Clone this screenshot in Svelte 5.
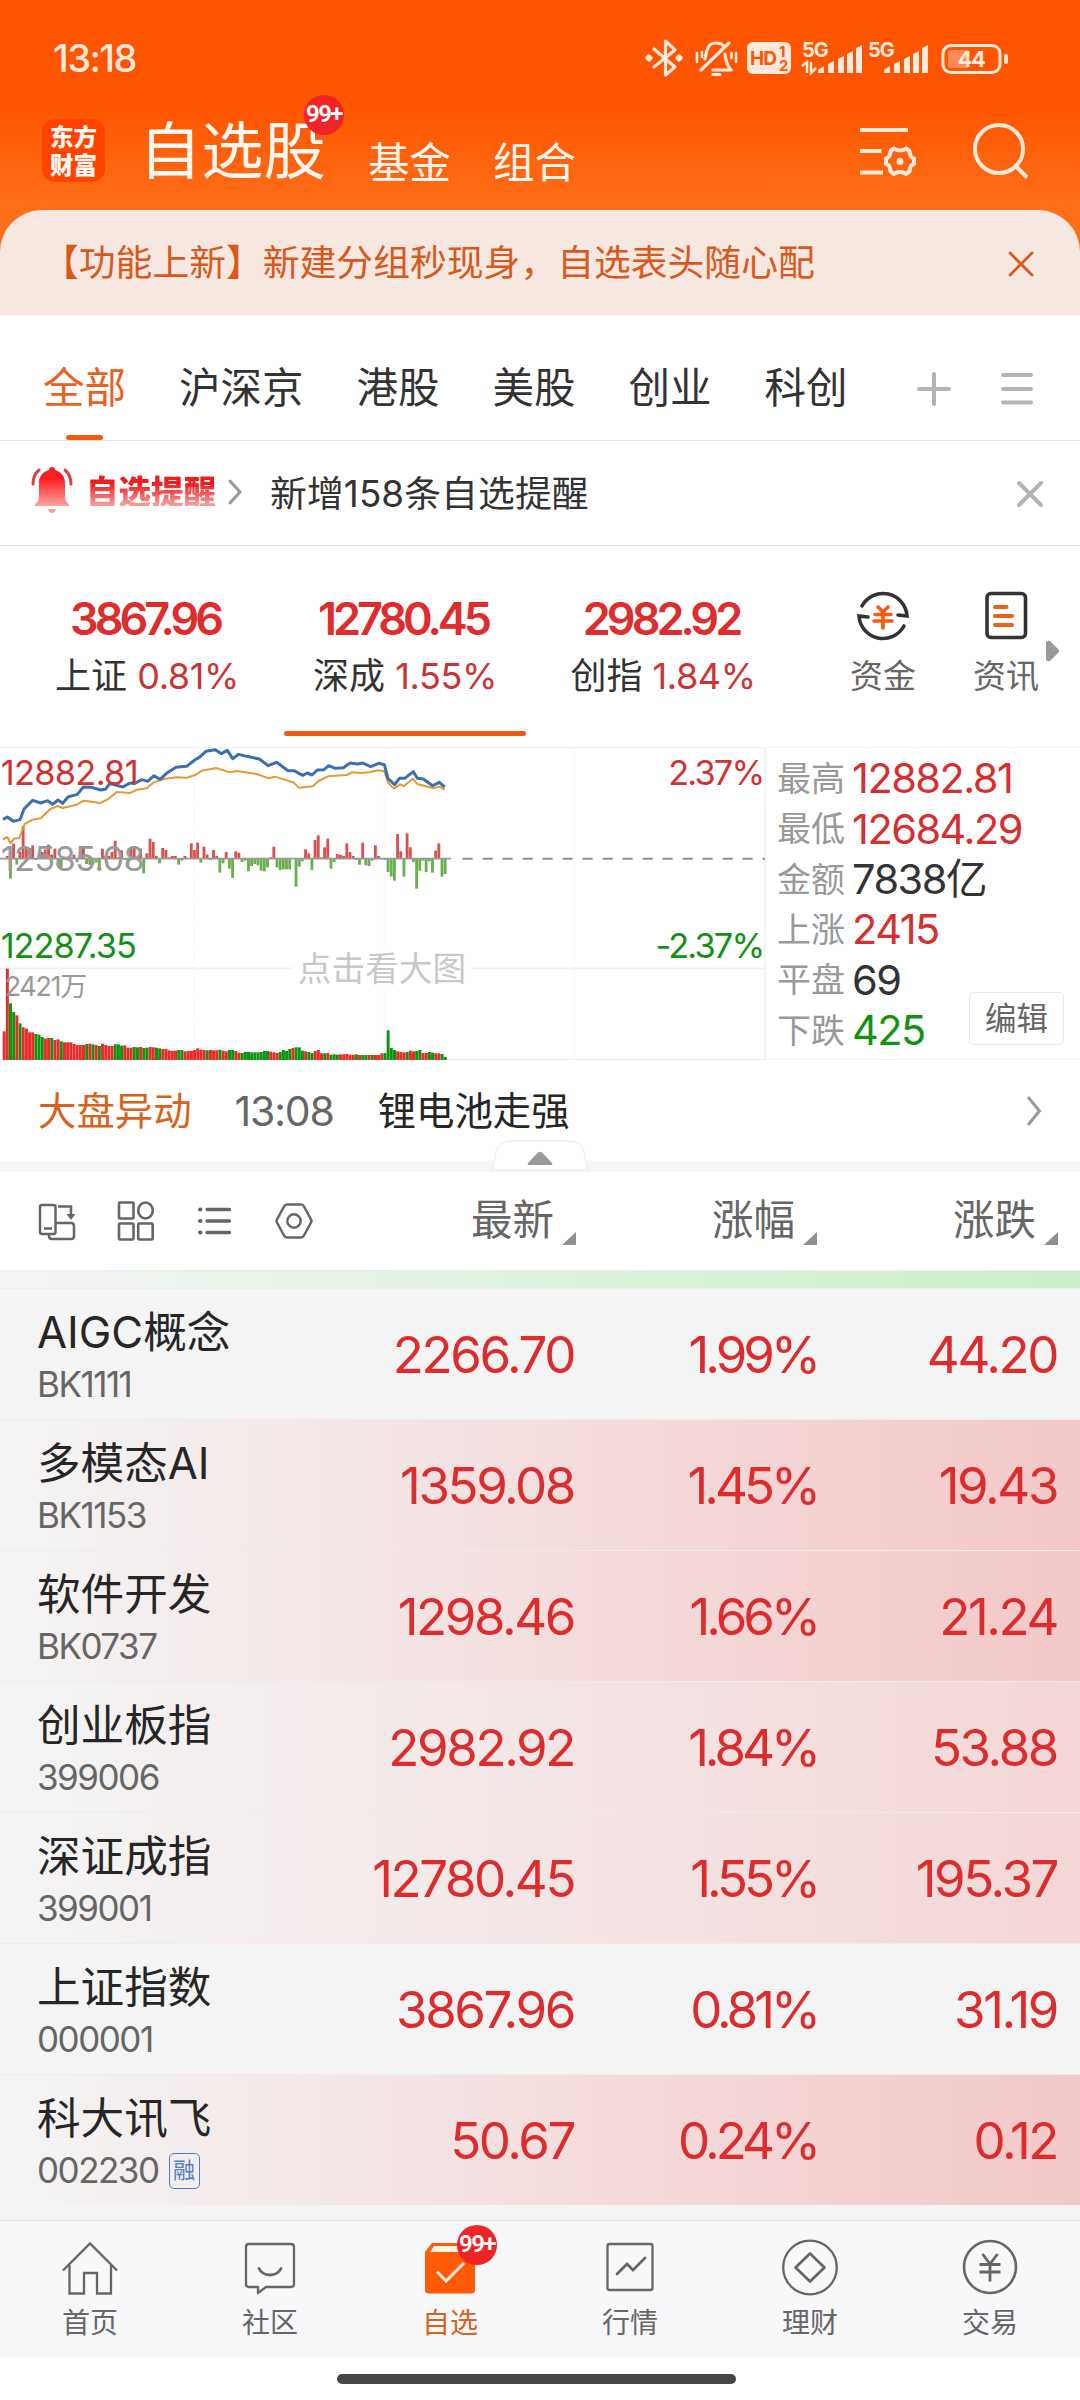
<script lang="ts">
	type Tint = 'flat' | 'light' | 'strong';
	type Quote = {
		name: string;
		code: string;
		price: string;
		percent: string;
		change: string;
		tint: Tint;
		margin?: boolean;
	};

	const groups = ['全部', '沪深京', '港股', '美股', '创业', '科创'];

	const indices = [
		{ name: '上证', value: '3867.96', percent: '0.81%' },
		{ name: '深成', value: '12780.45', percent: '1.55%' },
		{ name: '创指', value: '2982.92', percent: '1.84%' },
	];

	const stats = [
		{ label: '最高', value: '12882.81', tone: 'up' },
		{ label: '最低', value: '12684.29', tone: 'up' },
		{ label: '金额', value: '7838亿', tone: '' },
		{ label: '上涨', value: '2415', tone: 'up' },
		{ label: '平盘', value: '69', tone: '' },
		{ label: '下跌', value: '425', tone: 'down' },
	];

	const columns = ['最新', '涨幅', '涨跌'];

	const quotes: Quote[] = [
		{ name: 'AIGC概念', code: 'BK1111', price: '2266.70', percent: '1.99%', change: '44.20', tint: 'flat' },
		{ name: '多模态AI', code: 'BK1153', price: '1359.08', percent: '1.45%', change: '19.43', tint: 'strong' },
		{ name: '软件开发', code: 'BK0737', price: '1298.46', percent: '1.66%', change: '21.24', tint: 'strong' },
		{ name: '创业板指', code: '399006', price: '2982.92', percent: '1.84%', change: '53.88', tint: 'light' },
		{ name: '深证成指', code: '399001', price: '12780.45', percent: '1.55%', change: '195.37', tint: 'light' },
		{ name: '上证指数', code: '000001', price: '3867.96', percent: '0.81%', change: '31.19', tint: 'flat' },
		{ name: '科大讯飞', code: '002230', price: '50.67', percent: '0.24%', change: '0.12', tint: 'strong', margin: true },
	];

	const tabs = [
		{ id: 'home', label: '首页' },
		{ id: 'community', label: '社区' },
		{ id: 'watch', label: '自选' },
		{ id: 'market', label: '行情' },
		{ id: 'wealth', label: '理财' },
		{ id: 'trade', label: '交易' },
	];

	let activeGroup = $state(0);
	let activeIndex = $state(1);
	let activeTab = $state('watch');

	// one bar per time slot, positive is buying and negative is selling
	const STEP = 9.52;
	const flow = [
		0, 8, -60, 45, -18, 20, 98, 30, 32, 40, -4, 12, 20, 28, 42, 12, 30, -20, -28, 6,
		-5, 4, 12, -10, 38, 32, -16, -18, -16, -12, -30, 30, 8, 8, 20, 54, 4, 25, -4, -20,
		30, 34, 4, 30, -44, 16, 60, 50, 8, -14, 32, 26, 4, 8, 8, -18, -6, 8, 0, 46,
		26, 48, -12, 36, 12, -4, 26, 8, -42, -14, 20, -30, -58, 22, 18, -10, -6, -38, -22, -16,
		-20, -36, -38, -26, 4, 36, -26, -34, -32, -32, -32, 0, -84, -24, -8, 28, 16, -34, 56, 70,
		4, 34, 60, -30, -10, 14, 12, 8, 46, 20, 8, -4, -18, 48, -20, -22, -6, 40, 8, 0,
		-4, -40, -54, -66, 74, 22, -54, 76, 34, -10, -90, -36, -6, -40, -8, -42, 24, 46, -54, -46,
	];

	const volume = [
		86, 274, 170, 144, 134, 110, 98, 94, 83, 83, 78, 76, 69, 64, 66, 66, 60, 62, 56, 53,
		53, 53, 48, 45, 45, 45, 48, 49, 47, 45, 42, 49, 45, 42, 42, 47, 47, 43, 44, 37,
		37, 39, 38, 39, 36, 37, 39, 38, 37, 35, 33, 33, 29, 27, 28, 30, 30, 26, 27, 27,
		30, 35, 31, 30, 29, 30, 29, 29, 31, 28, 26, 30, 30, 27, 22, 21, 24, 24, 23, 23,
		23, 24, 27, 27, 25, 23, 21, 24, 30, 27, 33, 36, 38, 38, 28, 26, 24, 21, 27, 30,
		20, 20, 21, 16, 17, 16, 17, 17, 18, 16, 16, 17, 15, 15, 15, 15, 15, 15, 15, 20,
		21, 89, 36, 30, 26, 24, 23, 24, 28, 26, 27, 30, 21, 21, 24, 22, 20, 20, 18, 9,
	];
	const volumeDown = new Set([
		2, 3, 5, 10, 11, 12, 15, 18, 26, 28, 30, 35, 36, 37, 41, 42, 44, 45, 48, 49,
		55, 56, 64, 68, 71, 72, 75, 76, 77, 78, 79, 80, 81, 82, 83, 87, 88, 89, 90, 92,
		93, 94, 96, 97, 101, 103, 104, 105, 111, 113, 114, 116, 120, 121, 122, 123, 127, 130, 131, 134,
		135, 138, 139,
	]);

	const priceLine =
		'9,253 22,246 40,259 60,254 72,222 98,196 122,204 143,197 158,208 174,195 188,205 204,186 232,178 250,156 275,157 302,165 316,163 330,145 368,156 388,145 408,143 426,134 443,139 462,122 480,133 502,113 528,97 560,94 584,75 598,67 618,49 646,44 664,56 682,46 698,71 716,58 740,64 778,72 804,92 830,82 864,107 882,107 908,121 922,114 936,120 952,105 972,104 986,92 1006,100 1030,98 1050,84 1072,87 1088,84 1112,95 1136,85 1153,89 1164,131 1184,149 1198,130 1214,130 1240,110 1252,130 1270,132 1298,152 1318,142 1334,156';
	const averageLine =
		'9,313 22,306 32,325 42,311 58,309 74,267 98,254 122,250 150,223 172,213 188,219 230,209 252,197 300,204 322,194 350,171 390,174 412,164 440,160 460,143 492,132 530,127 560,128 584,121 606,107 648,99 690,112 712,108 770,117 806,130 824,125 880,142 896,158 938,154 956,138 984,124 1040,120 1056,112 1082,114 1108,112 1134,106 1153,109 1164,143 1182,161 1200,148 1212,153 1238,131 1252,147 1300,160 1318,155 1334,164';
</script>

<div class="screen">
	<header class="top">
		<div class="status">
			<span class="clock">13:18</span>
			<svg class="status-icons" width="376" height="44" viewBox="0 0 376 44" fill="none">
				<g stroke="#ffe9dc" stroke-width="3.200" stroke-linejoin="round" stroke-linecap="round">
					<path d="M9 13 30 31 20.500 39V5L30 14 9 31" />
					<path d="M4 20 6 22 4 24 2 22ZM34 20 36 22 34 24 32 22Z" />
				</g>
				<g stroke="#ffe9dc" stroke-width="3.200" stroke-linejoin="round" stroke-linecap="round">
					<path d="M60 23C62 13 63 7 71 7c4 0 7 1.500 8.500 4M68 34h18c-5-5-5-10-6-16M84 7 56 34M68 38.500h7" />
					<path d="M52 17v9M57 16v5M91 17v9M86.500 17v5" stroke-width="2.600" />
				</g>
				<rect x="102" y="6" width="44" height="32" rx="6" fill="#ffe9dc" />
				<text class="hd" x="105" y="29">HD</text>
				<text class="hd-num" x="134" y="21">1</text>
				<text class="hd-num" x="134" y="35">2</text>
				{#each [0, 66] as dx}
					<g fill="#ffe9dc" transform="translate({dx} 0)">
						<text class="gen" x="157" y="21">5G</text>
						<path d="M173 34l6-4v7h-6zM183 28l6-3v12h-6zM193 23l6-3v17h-6zM202 18l6-3v22h-6zM211 12l6-3v28h-6z" />
					</g>
				{/each}
				<path d="M157 30 162 26V37M166 26V37L171 32" stroke="#ffe9dc" stroke-width="2.500" />
				<rect x="298" y="9.500" width="57" height="27" rx="8" stroke="#ffe9dc" stroke-width="3" />
				<rect x="303" y="14" width="21" height="18" rx="3" fill="#ff8a55" />
				<path d="M361 20v6" stroke="#ffe9dc" stroke-width="4" stroke-linecap="round" />
				<text class="battery" x="326" y="31">44</text>
			</svg>
		</div>

		<div class="titlebar">
			<div class="logo"><span>东方</span><span>财富</span></div>
			<div class="title">自选股<span class="badge title-badge">99+</span></div>
			<span class="subtitle">基金</span>
			<span class="subtitle">组合</span>
			<svg class="list-gear" width="60" height="54" viewBox="0 0 60 54" fill="none" stroke="#ffe9dc" stroke-width="4">
				<path d="M2 7h48M2 28h21.500M2 49.500h23" />
				<path
					stroke-linejoin="round"
					d="M36 25.500q2.500 2 6 2 3.500 0 6-2l3.500 2.500q0 3.500 1.500 5.500 1 1.500 3 2v5.500q-2 .500-3 2-1.500 2-1.500 5.500l-3.500 2.500q-2.500-2-6-2-3.500 0-6 2l-3.500-2.500q0-3.500-1.500-5.500-1-1.500-3-2v-5.500q2-.500 3-2 1.500-2 1.500-5.500Z"
				/>
				<circle cx="42" cy="38.500" r="3.500" fill="#ffe9dc" stroke="none" />
			</svg>
			<svg width="58" height="58" viewBox="0 0 58 58" fill="none" stroke="#ffe9dc" stroke-width="4">
				<circle cx="27" cy="27" r="24" />
				<path d="M43.500 44 55 55.500" />
			</svg>
		</div>

		<div class="notice">
			<span>【功能上新】新建分组秒现身，自选表头随心配</span>
			<svg width="26" height="26" viewBox="0 0 26 26" stroke="#d8591b" stroke-width="2.800" stroke-linecap="round">
				<path d="M2 2 24 24M24 2 2 24" />
			</svg>
		</div>
	</header>

	<nav class="groups">
		{#each groups as group, i}
			<button class="group" class:active={i === activeGroup} onclick={() => (activeGroup = i)}>{group}</button>
		{/each}
		<svg class="add" width="36" height="36" viewBox="0 0 36 36" stroke="#b3b3b3" stroke-width="4" stroke-linecap="round">
			<path d="M18 3v30M3 18h30" />
		</svg>
		<svg width="34" height="34" viewBox="0 0 34 34" stroke="#b3b3b3" stroke-width="4" stroke-linecap="round">
			<path d="M3 3h28M3 17h28M3 30.500h28" />
		</svg>
	</nav>

	<section class="alert">
		<svg width="42" height="46" viewBox="0 0 42 46" fill="none">
			<defs>
				<linearGradient id="bell" x1="0" y1="0" x2="0" y2="1">
					<stop offset="0.300" stop-color="#fb1f22" />
					<stop offset="1" stop-color="#fda3a0" />
				</linearGradient>
			</defs>
			<path
				fill="url(#bell)"
				d="M21 0c2 0 3 1 3 3 7 2 10 7 10 13v12c0 5 1 7 4 9v2H4v-2c3-2 4-4 4-9V16c0-6 3-11 10-13 0-2 1-3 3-3Z"
			/>
			<path fill="#f9a09e" d="M17 42h8q-1 4-4 4t-4-4Z" />
			<path stroke="#d9423f" stroke-width="3" stroke-linecap="round" d="M8 3Q2 8 2 17M34 3q6 5 6 14" />
		</svg>
		<strong>自选提醒</strong>
		<svg class="alert-arrow" width="14" height="26" viewBox="0 0 14 26" fill="none" stroke="#999" stroke-width="3" stroke-linecap="round">
			<path d="M2 2 12 13 2 24" />
		</svg>
		<span class="alert-text">新增158条自选提醒</span>
		<svg width="28" height="28" viewBox="0 0 28 28" stroke="#b3b3b3" stroke-width="4" stroke-linecap="round">
			<path d="M3 3 25 25M25 3 3 25" />
		</svg>
	</section>

	<section class="indices">
		{#each indices as item, i}
			<button class="index" class:active={i === activeIndex} onclick={() => (activeIndex = i)}>
				<b>{item.value}</b>
				<span>{item.name} <em>{item.percent}</em></span>
			</button>
		{/each}
		<div class="shortcut funds">
			<svg width="54" height="54" viewBox="0 0 54 54" fill="none" stroke="#333" stroke-width="3.600" stroke-linecap="round">
				<path d="M6 17A24 24 0 0 1 51 27L42 26M48 37A24 24 0 0 1 3 27L12 28" />
				<path stroke="#fa5a0c" d="M22 18 27 23 32 18M19 25.500h16M18 32h18M27 24v15" />
			</svg>
			<span>资金</span>
		</div>
		<div class="shortcut news">
			<svg width="54" height="54" viewBox="0 0 54 54" fill="none" stroke-linecap="round">
				<rect x="8" y="4.500" width="38.500" height="44" rx="4" stroke="#333" stroke-width="3.600" />
				<path stroke="#e8621e" stroke-width="4" d="M16 18h11.500M16 27h17M16 36h17" />
			</svg>
			<span>资讯</span>
		</div>
		<svg class="more" width="14" height="22" viewBox="0 0 14 22" fill="#999">
			<path d="M0 2q2-2 4-1L12 9q2 2 0 4L4 21q-2 1-4-1Z" />
		</svg>
	</section>

	<section class="overview">
		<svg class="chart" width="766" height="313" viewBox="0 36 2298 939" fill="none">
			<path d="M0 37H2298M0 700H2298M0 974H2298" stroke="#f0f0f2" stroke-width="5" />
			<path d="M583 40V974M1153 40V974M1723 40V974" stroke="#e9e9e9" stroke-width="3" stroke-dasharray="3 6" />
			<path d="M2295 37V974" stroke="#eee" stroke-width="4" />
			<rect x="880" y="635" width="533" height="135" fill="#fff" />
			{#each flow as value, i}
				<rect
					x={8 + i * STEP}
					y={value > 0 ? 371 - value : 371}
					width="8.500"
					height={Math.abs(value)}
					fill={value > 0 ? '#d9504f' : '#68b04e'}
				/>
			{/each}
			{#each volume as value, i}
				<rect x={8 + i * STEP} y={975 - value} width="9" height={value} fill={volumeDown.has(i) ? '#109410' : '#ea2b2b'} />
			{/each}
			<path d="M0 371H1353" stroke="#999" stroke-width="5" />
			<path d="M1388 371H2295" stroke="#8c8c8c" stroke-width="6" stroke-dasharray="30 30" />
			<polyline points={averageLine} stroke="#e39a35" stroke-width="6" stroke-linejoin="round" />
			<polyline points={priceLine} stroke="#3d6fad" stroke-width="9" stroke-linejoin="round" />
			<text x="2" y="150" fill="#d03232">12882.81</text>
			<text x="2" y="407" fill="#999">12585.08</text>
			<text class="low" x="2" y="668" fill="#159015">12287.35</text>
			<text class="pct" x="2290" y="150" fill="#d03232" text-anchor="end">2.37%</text>
			<text class="pct" x="2290" y="668" fill="#159015" text-anchor="end">-2.37%</text>
			<text class="volume-max" x="14" y="783" fill="#999">2421万</text>
			<text class="hint" x="1146" y="737" fill="#c8c8c8" text-anchor="middle">点击看大图</text>
		</svg>
		<div class="stats">
			{#each stats as stat}
				<div class="stat"><span>{stat.label}</span><b class={stat.tone}>{stat.value}</b></div>
			{/each}
			<button class="edit">编辑</button>
		</div>
	</section>

	<section class="movers">
		<span class="movers-title">大盘异动</span>
		<time>13:08</time>
		<span class="movers-text">锂电池走强</span>
		<svg width="16" height="30" viewBox="0 0 16 30" fill="none" stroke="#999" stroke-width="3">
			<path d="M2 1 13.500 15 2 29" />
		</svg>
	</section>

	<div class="divider">
		<svg class="fold" width="98" height="31" viewBox="0 0 98 31">
			<path d="M1 30 5 12Q8 1 20 1H78Q90 1 93 12L97 30Z" fill="#fff" stroke="#eff0f2" stroke-width="1.500" />
			<path d="M37 23 47 12.500q2-1.500 4 0L61 23q1 2-1 2H38q-2 0-1-2Z" fill="#999" />
		</svg>
	</div>

	<section class="table-head">
		<div class="tools">
			<svg width="38" height="42" viewBox="0 0 38 42" fill="none" stroke="#666" stroke-width="2.500">
				<rect x="2" y="5" width="15.500" height="29" rx="2" />
				<path d="M6 28.500h8M20 6.500h13V16M11 34v2q0 3 3 3H33q3 0 3-3V26q0-3-3-3H17.500" />
				<path d="M28.500 14h9L33 20Z" fill="#666" stroke="none" />
			</svg>
			<svg width="38" height="42" viewBox="0 0 38 42" fill="none" stroke="#666" stroke-width="2.600">
				<rect x="2" y="2.500" width="14.500" height="16" rx="1" />
				<ellipse cx="28.500" cy="10.500" rx="7.300" ry="8" />
				<rect x="2" y="23.500" width="14.500" height="16" rx="1" />
				<rect x="21.200" y="23.500" width="14.500" height="16" rx="1" />
			</svg>
			<svg width="38" height="42" viewBox="0 0 38 42" fill="none" stroke="#666" stroke-width="3.300" stroke-linecap="round">
				<path d="M11 9.500h22.500M11 21h22.500M11 32.500h22.500" />
				<path d="M4 9.500h.500M4 21h.500M4 32.500h.500" stroke-width="4" />
			</svg>
			<svg width="38" height="42" viewBox="0 0 38 42" fill="none" stroke="#666" stroke-width="2.500" stroke-linejoin="round">
				<path d="M12 4.500H26q2 0 3 2L36 19.500q1 1.500 0 3L29 35.500q-1 2-3 2H12q-2 0-3-2L2 22.500q-1-1.500 0-3L9 6.500q1-2 3-2Z" />
				<circle cx="19" cy="21" r="6.700" />
			</svg>
		</div>
		{#each columns as column}
			<div class="column">
				<span>{column}</span>
				<svg width="14" height="13" viewBox="0 0 14 13"><path d="M14 0V13H0Z" fill="#8e8e93" /></svg>
			</div>
		{/each}
	</section>

	<main class="quotes">
		<div class="peek"></div>
		{#each quotes as quote (quote.code)}
			<div class="quote {quote.tint}">
				<div class="who">
					<span class="name">{quote.name}</span>
					<span class="code">
						{quote.code}
						{#if quote.margin}<i>融</i>{/if}
					</span>
				</div>
				<span class="num price">{quote.price}</span>
				<span class="num percent">{quote.percent}</span>
				<span class="num change">{quote.change}</span>
			</div>
		{/each}
	</main>

	<nav class="tabbar">
		{#each tabs as tab}
			<button class="tab" class:active={tab.id === activeTab} onclick={() => (activeTab = tab.id)}>
				<svg width="60" height="58" viewBox="0 0 60 58" fill="none" stroke="#666" stroke-width="2.300">
					{#if tab.id === 'home'}
						<path d="M3 32.500 30 5.500 57 32.500M9.500 27V55.500H24V35H37V55.500H51V27" />
					{:else if tab.id === 'community'}
						<path d="M9 6H51Q54 6 54 9V46Q54 49 51 49H26L18 55V49H9Q6 49 6 46V9Q6 6 9 6Z" stroke-linejoin="round" />
						<path d="M19 30.500Q22 37 30 37T41 30.500" stroke-width="2.800" stroke-linecap="round" />
					{:else if tab.id === 'watch'}
						<path d="M12 5H50Q54 5 55 9V52Q55 55.500 51.500 55.500H8.500Q5 55.500 5 52V14Z" fill="#ff5a05" stroke="none" />
						<path d="M14 8H50V14H10Z" fill="#fff4ec" stroke="none" />
						<path d="M17 33.500 26 43 44 25" stroke="#ffe9dc" stroke-width="3" />
					{:else if tab.id === 'market'}
						<rect x="7.500" y="6" width="45" height="46" rx="2" />
						<path d="M17 36 27 26 33 32 45 20" stroke-width="2.800" stroke-linecap="round" />
					{:else if tab.id === 'wealth'}
						<circle cx="30" cy="29.500" r="26.800" />
						<path d="M30 15.500 44.500 29.500 30 43.500 15.500 29.500Z" stroke-linejoin="round" stroke-width="2.700" />
					{:else}
						<circle cx="30" cy="29" r="26" stroke-width="2.600" />
						<path d="M22.500 16 30 26 37.500 16M19.500 26.500h21M19.500 34h21M30 26v17.500" stroke-width="2.800" />
					{/if}
				</svg>
				<span>{tab.label}</span>
				{#if tab.id === 'watch'}<span class="badge tab-badge">99+</span>{/if}
			</button>
		{/each}
	</nav>
	<footer class="home-area"><div class="home-bar"></div></footer>
</div>

<style>
	:global(body) {
		margin: 0;
		background: #fff;
	}

	.screen {
		width: 1080px;
		height: 2400px;
		display: flex;
		flex-direction: column;
		overflow: hidden;
		background: #fff;
		color: #333;
		font-family: Inter, 'Noto Sans CJK SC', sans-serif;
		line-height: 1;
		white-space: nowrap;
	}

	svg {
		display: block;
		flex: none;
	}

	button {
		margin: 0;
		padding: 0;
		border: 0;
		background: none;
		color: inherit;
		font: inherit;
	}

	.top {
		height: 315px;
		display: flex;
		flex-direction: column;
		background: linear-gradient(#ff5500 105px, #ff6e18 205px, #ff6e18);
	}

	.status {
		height: 108px;
		padding: 8px 50px 0 53px;
		box-sizing: border-box;
		display: flex;
		align-items: center;
		justify-content: space-between;
	}

	.clock {
		color: #ffe9dc;
		font-size: 38px;
		font-weight: 500;
		letter-spacing: -1.6px;
	}

	.status-icons {
		margin-right: 9px;
	}

	.status-icons text {
		font-weight: 700;
	}

	.hd {
		font-size: 19px;
		fill: #ff5500;
		letter-spacing: -1px;
	}

	.hd-num {
		font-size: 15px;
		fill: #ff5500;
	}

	.gen {
		font-size: 20px;
		letter-spacing: -1px;
	}

	.battery {
		font-size: 22px;
		fill: #ffe9dc;
		letter-spacing: -1.5px;
		text-anchor: middle;
	}

	.titlebar {
		height: 102px;
		padding: 0 50px 0 42px;
		display: flex;
		align-items: flex-start;
		color: #fff8f2;
	}

	.logo {
		width: 63px;
		height: 63px;
		margin-top: 11px;
		border-radius: 13px;
		background: #ff4400;
		display: flex;
		flex-direction: column;
		align-items: center;
		justify-content: center;
		gap: 4px;
		font-family: 'Noto Sans CJK SC', sans-serif;
		font-size: 23.5px;
		font-weight: 900;
	}

	.title {
		position: relative;
		margin: 13px 42px 0 34px;
		font-size: 62.3px;
	}

	.badge {
		position: absolute;
		height: 40px;
		border-radius: 20px;
		background: #f02427;
		color: #fff;
		font-family: Roboto, sans-serif;
		font-size: 24px;
		font-weight: 600;
		line-height: 39px;
		letter-spacing: -1.6px;
		text-align: center;
	}

	.title-badge {
		top: -26px;
		left: 165px;
		width: 40px;
	}

	.subtitle {
		margin: 35px 42px 0 0;
		font-size: 41.5px;
	}

	.list-gear {
		margin: 15px 54px 0 auto;
	}

	.list-gear + svg {
		margin-top: 14px;
	}

	.notice {
		height: 105px;
		padding: 2px 46px 0 42px;
		box-sizing: border-box;
		display: flex;
		align-items: center;
		justify-content: space-between;
		border-radius: 42px 42px 0 0;
		background: #f6e7e0;
		color: #d8591b;
		font-size: 36.8px;
	}

	.groups {
		height: 126px;
		padding: 22px 46px 0 43px;
		box-sizing: border-box;
		display: flex;
		align-items: center;
		border-bottom: 1px solid #e2e2e2;
		font-size: 41.5px;
	}

	.group {
		position: relative;
		height: 103px;
		margin-right: 53px;
	}

	.group.active {
		color: #e8621e;
	}

	.group.active::after {
		content: '';
		position: absolute;
		bottom: 0;
		left: 23px;
		width: 37px;
		height: 5px;
		border-radius: 3px;
		background: #f05a10;
	}

	.add {
		margin: 0 48px 0 auto;
	}

	.alert {
		height: 105px;
		padding: 2px 36px 0 31px;
		box-sizing: border-box;
		display: flex;
		align-items: center;
		border-bottom: 1px solid #e2e2e2;
	}

	.alert > svg:first-child {
		margin-top: -8px;
	}

	.alert strong {
		margin: -8px 0 0 13px;
		background: linear-gradient(#ee1d22 30%, #f79a98 95%);
		background-clip: text;
		color: transparent;
		font-family: 'Noto Sans CJK SC', sans-serif;
		font-size: 32.5px;
		font-weight: 900;
	}

	.alert-arrow {
		margin: -4px 28px 0 12px;
	}

	.alert-text {
		flex: 1;
		font-size: 36.8px;
		letter-spacing: 0.1px;
	}

	.indices {
		height: 201px;
		padding-left: 18px;
		display: flex;
		position: relative;
	}

	.index {
		position: relative;
		width: 258px;
		padding-top: 50px;
		display: flex;
		flex-direction: column;
		align-items: center;
	}

	.index b {
		margin-bottom: 17px;
		padding-right: 4px;
		color: #df2c2c;
		font-size: 45px;
		font-weight: 600;
		letter-spacing: -4px;
	}

	.index span {
		font-size: 36px;
	}

	.index em {
		color: #cc3434;
		font-style: normal;
		letter-spacing: -0.4px;
	}

	.index.active::after {
		content: '';
		position: absolute;
		left: 8px;
		right: 8px;
		bottom: 11px;
		height: 5px;
		border-radius: 3px;
		background: #ea5b12;
	}

	.shortcut {
		padding-top: 43px;
		display: flex;
		flex-direction: column;
		align-items: center;
		gap: 17px;
		color: #666;
		font-size: 33px;
	}

	.funds {
		margin-left: 58px;
	}

	.news {
		margin-left: 57px;
	}

	.more {
		margin: 94px 0 0 7px;
	}

	.overview {
		height: 313px;
		display: flex;
	}

	.chart text {
		font-size: 103px;
		letter-spacing: -2px;
	}

	.chart .low {
		letter-spacing: -3px;
	}

	.chart .pct {
		letter-spacing: -5.5px;
	}

	.chart .volume-max {
		font-size: 81px;
		letter-spacing: -4px;
	}

	.chart .hint {
		font-size: 101px;
		letter-spacing: 0;
	}

	.stats {
		position: relative;
		flex: 1;
		padding: 6px 0 0 11px;
		border-top: 1px solid #f0f0f2;
		border-bottom: 1px solid #f0f0f2;
	}

	.stat {
		height: 50.3px;
		display: flex;
		align-items: center;
		gap: 7px;
	}

	.stat span {
		color: #999;
		font-size: 34px;
	}

	.stat b {
		font-size: 41.5px;
		font-weight: 400;
		letter-spacing: -1.5px;
	}

	.stat .up {
		color: #d62f2f;
	}

	.stat .down {
		color: #139313;
	}

	.edit {
		position: absolute;
		right: 16px;
		bottom: 14px;
		width: 95px;
		height: 53px;
		border: 1px solid #e8e8e8;
		border-radius: 5px;
		background: #fff;
		color: #666;
		font-size: 31.5px;
	}

	.movers {
		height: 101px;
		padding: 1px 38px 0;
		box-sizing: border-box;
		display: flex;
		align-items: center;
		font-size: 38.4px;
	}

	.movers-title {
		color: #d8611b;
	}

	.movers time {
		margin: 0 44px 0 43px;
		color: #666;
		font-size: 41px;
		letter-spacing: -1.2px;
	}

	.movers-text {
		flex: 1;
		color: #262626;
	}

	.divider {
		position: relative;
		height: 11px;
		background: #f6f7fa;
	}

	.fold {
		position: absolute;
		left: 491px;
		bottom: 1px;
	}

	.table-head {
		height: 98px;
		padding: 0 22px 0 38px;
		display: flex;
		align-items: center;
		border-bottom: 1px solid #ececec;
	}

	.tools {
		width: 300px;
		display: flex;
		gap: 41px;
	}

	.column {
		width: 241px;
		display: flex;
		align-items: flex-end;
		justify-content: flex-end;
		gap: 8px;
		color: #666;
		font-size: 41.5px;
	}

	.column svg {
		margin-bottom: -3px;
	}

	.tools + .column {
		width: 238px;
	}

	.quotes {
		height: 949px;
		background: #f4f4f4;
	}

	.peek {
		height: 17px;
		background: linear-gradient(90deg, #f4f4f4, #c9f0c9);
	}

	.quote {
		height: 131px;
		padding: 0 23px 0 37px;
		box-sizing: border-box;
		display: flex;
		align-items: center;
		border-top: 1px solid #ececec;
	}

	.quote.strong {
		background: linear-gradient(90deg, #f4f4f4, #f4c8c8);
	}

	.quote.light {
		background: linear-gradient(90deg, #f4f4f4, #f4d7d7);
	}

	.who {
		width: 300px;
		padding-top: 6px;
		display: flex;
		flex-direction: column;
		gap: 12px;
	}

	.name {
		color: #262626;
		font-size: 43.6px;
	}

	.code {
		height: 36px;
		display: flex;
		align-items: center;
		gap: 10px;
		color: #666;
		font-size: 35px;
		letter-spacing: -1.5px;
	}

	.code i {
		width: 29px;
		height: 34px;
		border: 1px solid #4a80c4;
		border-radius: 5px;
		color: #4a80c4;
		font-size: 22px;
		font-style: normal;
		letter-spacing: 0;
		line-height: 33px;
		text-align: center;
	}

	.num {
		color: #de2b2b;
		font-size: 51px;
		letter-spacing: -2.4px;
		text-align: right;
	}

	.price {
		width: 237px;
	}

	.percent {
		width: 243px;
		letter-spacing: -4px;
	}

	.change {
		width: 240px;
	}

	.tabbar {
		height: 138px;
		box-sizing: border-box;
		display: flex;
		border-top: 1px solid #dedede;
		background: #f8f8fb;
	}

	.tab {
		position: relative;
		flex: 1;
		padding-top: 17px;
		display: flex;
		flex-direction: column;
		align-items: center;
		gap: 13px;
		color: #666;
		font-size: 28px;
	}

	.tab.active {
		color: #d8611b;
	}

	.tab-badge {
		top: 4px;
		left: 97px;
		width: 40px;
	}

	.home-area {
		height: 42px;
		display: flex;
		background: #fff;
	}

	.home-bar {
		width: 399px;
		height: 10px;
		margin: 16px 0 0 337px;
		border-radius: 5px;
		background: #464646;
	}
</style>
